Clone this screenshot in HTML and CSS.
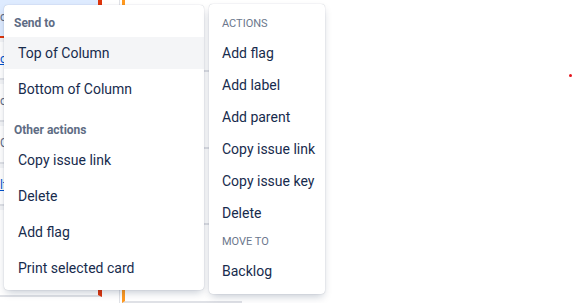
FILE: index.html
```html
<!DOCTYPE html>
<html lang="en">
<head>
    <meta charset="UTF-8">
    <title>Board card menu</title>
    <link rel="stylesheet" href="styles.css">
</head>
<body>
    <div class="page">
        <!-- board behind the menus, mostly hidden -->
        <div class="board">
            <div class="col col-first">
                <div class="card selected"><span class="key">o</span></div>
                <div class="card"><span class="key link">o</span></div>
                <div class="card"><span class="key">o</span></div>
                <div class="card"><span class="key">C</span></div>
                <div class="card"><span class="key link">lt</span></div>
                <div class="card last"><span class="avatar"></span></div>
            </div>
            <div class="col col-second">
                <div class="card"></div>
                <div class="card"></div>
                <div class="card"></div>
                <div class="card bottom-card"><span class="key">AEGD-AE</span></div>
            </div>
        </div>

        <div class="menu menu-send">
            <div class="group-title">Send to</div>
            <div class="item active">Top of Column</div>
            <div class="item">Bottom of Column</div>
            <div class="group-title spaced">Other actions</div>
            <div class="item">Copy issue link</div>
            <div class="item">Delete</div>
            <div class="item">Add flag</div>
            <div class="item">Print selected card</div>
        </div>

        <div class="menu menu-actions">
            <div class="section-title">Actions</div>
            <div class="item">Add flag</div>
            <div class="item">Add label</div>
            <div class="item">Add parent</div>
            <div class="item">Copy issue link</div>
            <div class="item">Copy issue key</div>
            <div class="item">Delete</div>
            <div class="section-title">Move to</div>
            <div class="item">Backlog</div>
        </div>

        <span class="dot"></span>
    </div>
</body>
</html>
```

FILE: styles.css
```css
body {
    margin: 0;
    padding: 0;
    background-color: #fff;
    font-family: "Segoe UI", Roboto, "Noto Sans", sans-serif;
    color: #172b4d;
}
.page {
    position: relative;
    width: 574px;
    height: 303px;
    overflow: hidden;
}

/* board */
.board {
    display: flex;
    height: 303px;
}
.col {
    display: flex;
    flex-direction: column;
    gap: 4px;
}
.col-first {
    width: 102px;
    background-color: #f4f5f7;
    height: 297px;
}
.col-second {
    width: 120px;
    margin-left: 17px;
    padding-left: 2px;
    border-left: 1px solid #dfe1e6;
}
.card {
    height: 36px;
    background-color: #fff;
    border-bottom: 2px solid #dfe1e6;
    font-size: 12px;
    position: relative;
}
.col-first .card {
    border-right: 4px solid #de350b;
}
.col-first .card.selected {
    background-color: #deebff;
    border-bottom-color: #de350b;
}
.col-second .card {
    border-left: 3px solid #ff991f;
    height: 90px;
}
.col-second .bottom-card {
    padding: 2px 0 0 8px;
}
.key {
    display: block;
    padding: 10px 0 0 0;
    color: #5e6c84;
}
.bottom-card .key {
    padding: 0;
    font-size: 11px;
}
.key.link {
    color: #0052cc;
    text-decoration: underline;
}
.card.last {
    flex: 1;
}
.avatar {
    display: block;
    width: 14px;
    height: 14px;
    border-radius: 50%;
    background-color: #8b5e3c;
    margin: 7px 0 0 70px;
}

/* menus */
.menu {
    position: absolute;
    background-color: #fff;
    border-radius: 4px;
    box-shadow: 0 4px 8px -2px rgba(9, 30, 66, 0.25), 0 0 1px rgba(9, 30, 66, 0.31);
    box-sizing: border-box;
}
.menu-send {
    left: 4px;
    top: 5px;
    width: 200px;
    height: 285px;
    padding: 10px 0 2px;
}
.menu-send .group-title {
    font-size: 12px;
    font-weight: 700;
    line-height: 16px;
    color: #5e6c84;
    padding-left: 10px;
    margin-bottom: 6px;
}
.menu-send .group-title.spaced {
    margin-top: 17px;
}
.menu-send .item {
    height: 32px;
    line-height: 33px;
    margin-bottom: 4px;
    padding-left: 14px;
    font-size: 14px;
}
.item.active {
    background-color: #f4f5f7;
}
.menu-actions {
    left: 209px;
    top: 4px;
    width: 116px;
    height: 290px;
    padding: 12px 0 7px;
}
.section-title {
    font-size: 11px;
    line-height: 16px;
    text-transform: uppercase;
    color: #6b778c;
    padding-left: 13px;
    margin-bottom: 5px;
}
.menu-actions .item + .section-title {
    margin-top: 5px;
}
.menu-actions .item {
    height: 32px;
    line-height: 33px;
    padding-left: 13px;
    font-size: 14px;
}
.dot {
    position: absolute;
    left: 569px;
    top: 74px;
    width: 3px;
    height: 3px;
    border-radius: 50%;
    background-color: #e5141d;
}
```
